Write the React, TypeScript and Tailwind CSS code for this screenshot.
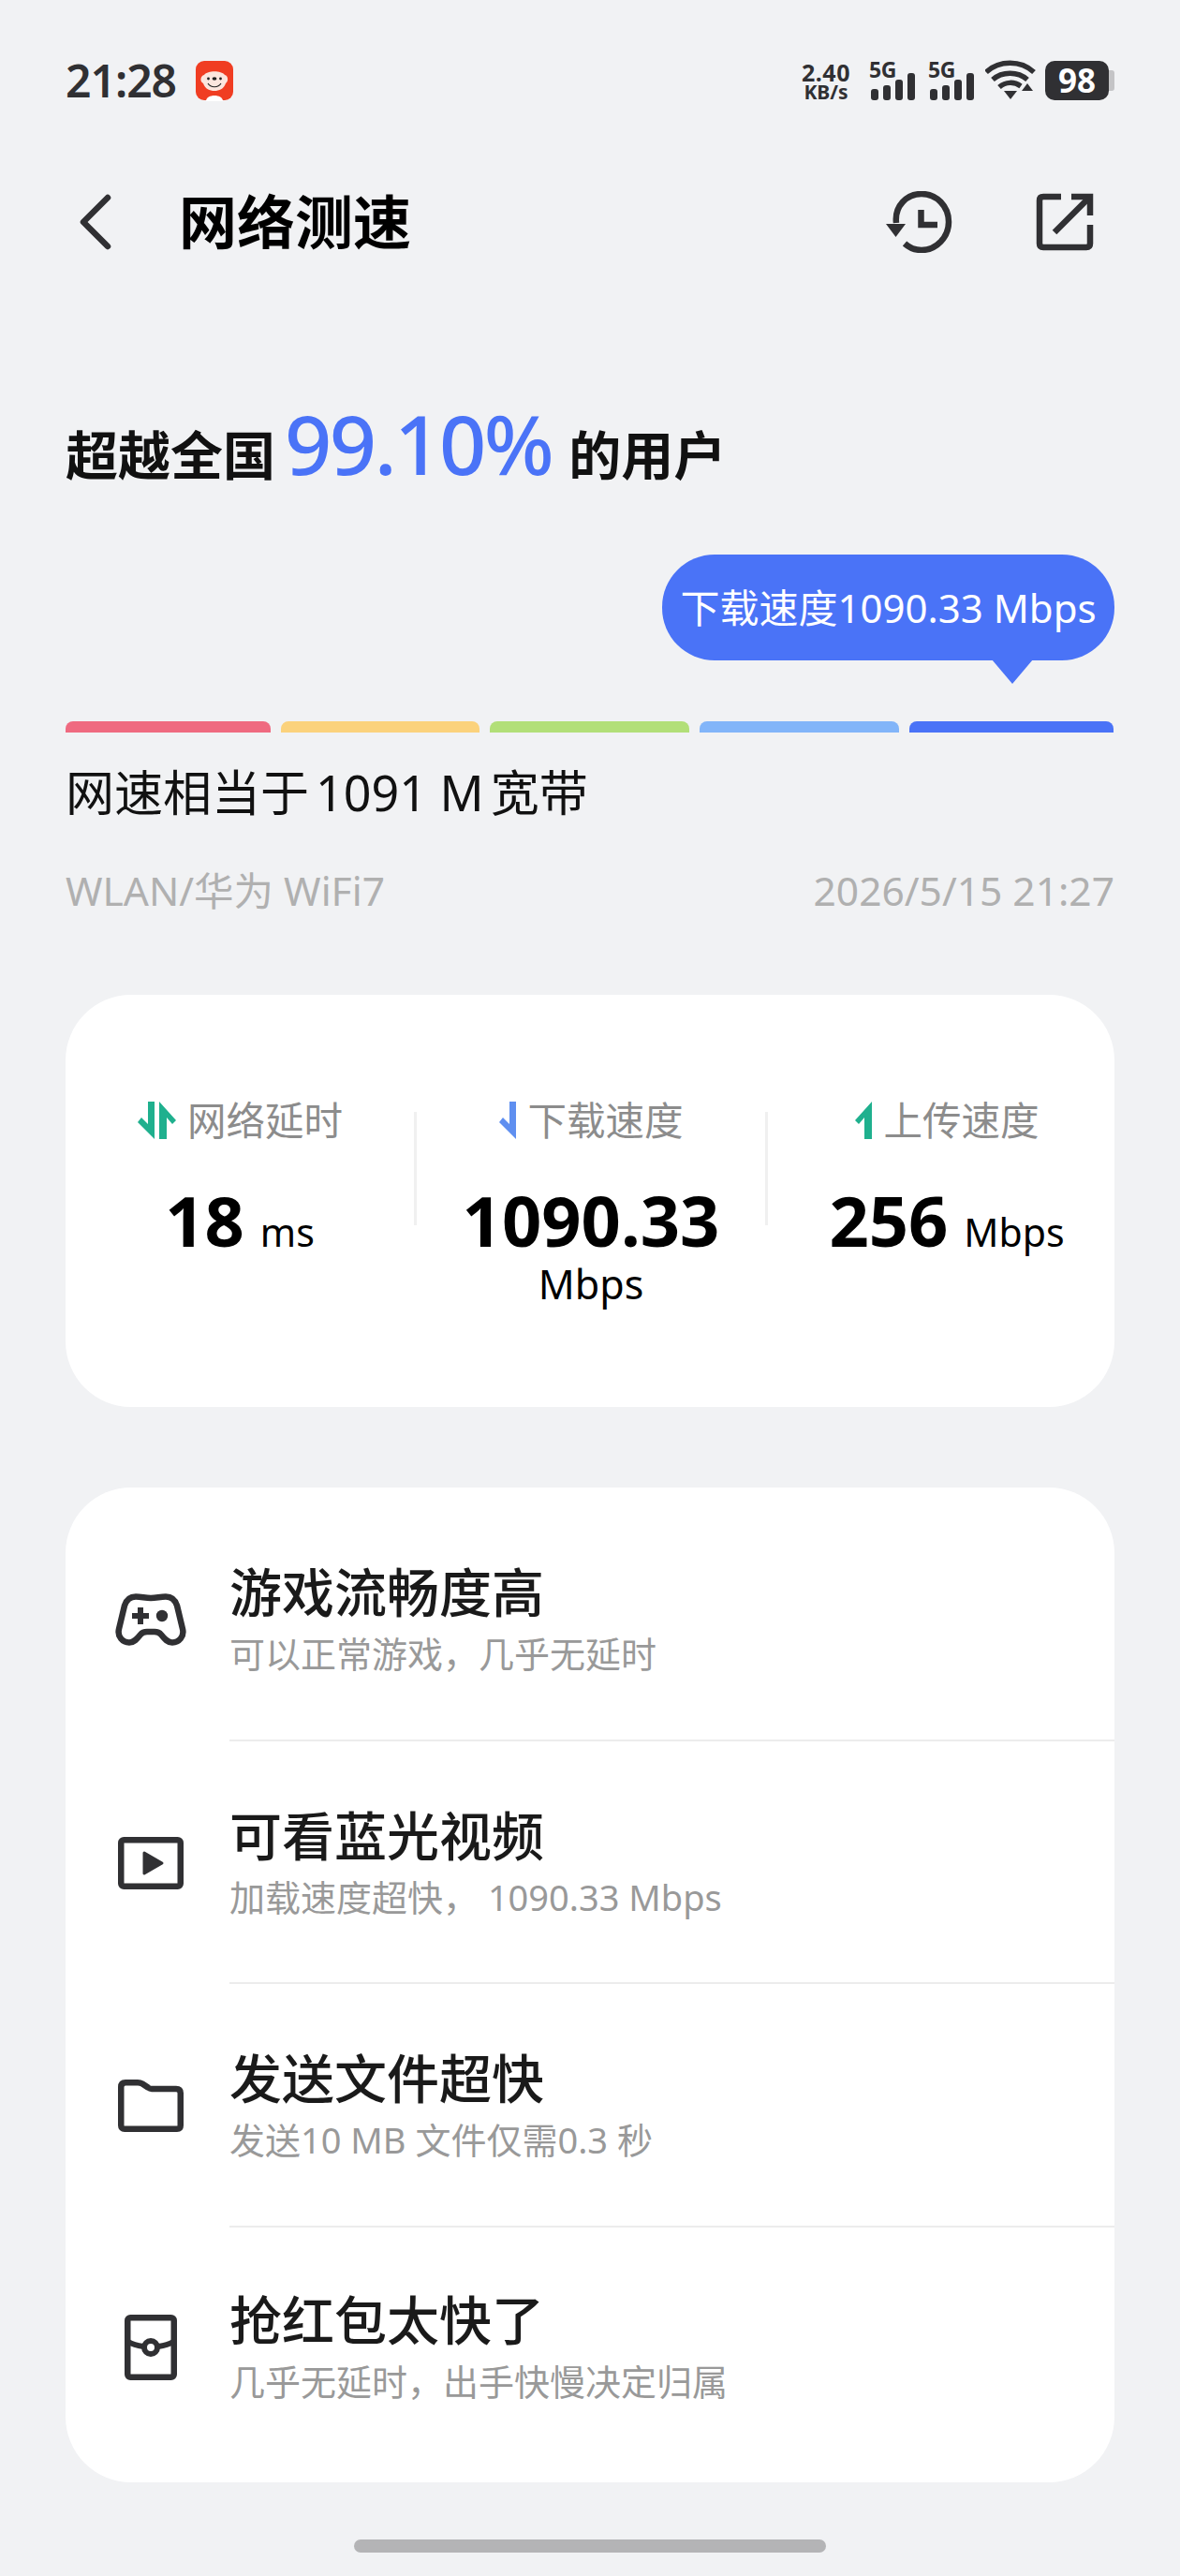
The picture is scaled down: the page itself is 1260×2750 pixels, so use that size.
import React from "react";

function Signal() {
  return (
    <div className="flex flex-col w-[50px] h-[42px]">
      <span className="text-[23px] leading-[19px] font-bold text-[#303033] tracking-[-0.5px]">5G</span>
      <svg width="50" height="29" viewBox="0 0 50 29" className="-mt-[6px]">
        <g fill="#303033">
          <rect x="2" y="17" width="8" height="12" rx="3" />
          <rect x="15" y="13" width="8" height="16" rx="3" />
          <rect x="28" y="7" width="8" height="22" rx="3" />
          <rect x="41" y="0" width="8" height="29" rx="3" />
        </g>
      </svg>
    </div>
  );
}

function Mascot() {
  return (
    <svg width="42" height="44" viewBox="0 0 42 44">
      <rect x="1" y="1" width="40" height="42" rx="9" fill="#f03d22" />
      <path d="M10 16 C14 11 28 11 32 16 C36 17 36 23 33 25 C31 31 26 33 21 33 C16 33 11 31 9 25 C5 23 6 17 10 16 Z" fill="#fbe6de" />
      <path d="M12 44 C12 36 30 36 30 44 Z" fill="#ffffff" />
      <circle cx="14.5" cy="20" r="1.4" fill="#222" />
      <circle cx="27.5" cy="20" r="1.4" fill="#222" />
      <ellipse cx="21" cy="20" rx="2.4" ry="1.8" fill="#222" />
      <path d="M14 25 C17 30 25 30 28 25" fill="none" stroke="#222" strokeWidth="1.1" />
    </svg>
  );
}

function StatusBar() {
  return (
    <div className="flex items-center justify-between h-[42px] mt-[65px]">
      <div className="flex items-center">
        <span className="text-[48px] leading-[42px] font-semibold text-[#303033] tracking-[-1px]">21:28</span>
        <span className="ml-[20px] flex"><Mascot /></span>
      </div>
      <div className="flex items-center">
        <div className="flex flex-col items-center w-[56px] font-bold text-[#303033]">
          <span className="text-[25px] leading-[24px] tracking-[0.5px]">2.40</span>
          <span className="text-[21px] leading-[18px]">KB/s</span>
        </div>
        <div className="ml-[18px]"><Signal /></div>
        <div className="ml-[13px]"><Signal /></div>
        <svg width="56" height="44" viewBox="0 0 56 44" className="ml-[11px]">
          <g fill="none" stroke="#303033" strokeWidth="5.5">
            <path d="M1 13 C15 0 38 0 52 13" />
            <path d="M8 21 C18 12 35 12 45 21" />
            <path d="M15 29 C22 23 31 23 38 28" />
          </g>
          <path d="M20 33 H34 L27 42 Z" fill="#303033" />
          <path d="M39 33 L45 25 L51 33 Z" fill="#303033" />
        </svg>
        <div className="ml-[8px] flex items-center">
          <div className="w-[68px] h-[42px] rounded-[10px] bg-[#303033] flex items-center justify-center text-white text-[35px] leading-[42px] font-bold">98</div>
          <div className="w-[6px] h-[22px] rounded-r-[3px] bg-[#c4c4c6]" />
        </div>
      </div>
    </div>
  );
}

function Header() {
  return (
    <div className="flex items-center justify-between h-[60px] mt-[100px]">
      <div className="flex items-center">
        <svg width="36" height="60" viewBox="0 0 36 60" className="ml-[14px]">
          <path d="M31 4 L5 30 L31 56" fill="none" stroke="#303033" strokeWidth="6.5" strokeLinecap="round" strokeLinejoin="round" />
        </svg>
        <span className="ml-[71px] text-[62px] leading-[60px] font-bold text-black">网络测速</span>
      </div>
      <div className="flex items-center">
        <svg width="72" height="66" viewBox="0 0 72 66">
          <path d="M11 34 C9 16 22 3 38 3 C54 3 67 16 67 33 C67 49 54 63 38 63 C31 63 25 60.5 20 56" fill="none" stroke="#303033" strokeWidth="6.5" />
          <path d="M0 35 H21 L10.5 49 Z" fill="#303033" />
          <path d="M37.5 20 V36 H55" fill="none" stroke="#303033" strokeWidth="6.5" />
        </svg>
        <svg width="62" height="62" viewBox="0 0 62 62" className="ml-[88px] mr-[22px]">
          <path d="M27 4 H8 Q4 4 4 8 V54 Q4 58 8 58 H54 Q58 58 58 54 V34" fill="none" stroke="#303033" strokeWidth="6.5" />
          <path d="M38 4 H58 V24" fill="none" stroke="#303033" strokeWidth="6.5" />
          <path d="M57 5 L20 42" fill="none" stroke="#303033" strokeWidth="6.5" />
        </svg>
      </div>
    </div>
  );
}

function HalfDown({ color }: { color: string }) {
  return (
    <svg width="20" height="40" viewBox="0 0 20 40">
      <path d="M12 0 H19 V40 L1 22 L5 17 L12 24 Z" fill={color} />
    </svg>
  );
}

function HalfUpRight({ color }: { color: string }) {
  return (
    <svg width="20" height="40" viewBox="0 0 20 40">
      <path d="M1 0 L19 20 L15 24 L9 17 V40 H1 Z" fill={color} />
    </svg>
  );
}

function HalfUpLeft({ color }: { color: string }) {
  return (
    <svg width="20" height="40" viewBox="0 0 20 40">
      <path d="M19 0 V40 H11 V17 L5 24 L1 20 Z" fill={color} />
    </svg>
  );
}

function Stat({ icon, label, value, unit, stacked, className }: { icon: React.ReactNode; label: string; value: string; unit: string; stacked?: boolean; className: string }) {
  return (
    <div className={"flex flex-col items-center " + className}>
      <div className="flex items-center h-[50px]">
        {icon}
        <span className="ml-[11px] text-[41.5px] leading-[50px] text-[#8c8c8c]">{label}</span>
      </div>
      <div className={"mt-[42px] " + (stacked ? "flex flex-col items-center" : "flex items-baseline")}>
        <span className="text-[74px] leading-[80px] font-bold text-black">{value}</span>
        <span className={stacked ? "mt-[3px] text-[43px] leading-[50px] text-black" : "ml-[17px] text-[41px] leading-[80px] text-black"}>{unit}</span>
      </div>
    </div>
  );
}

function Row({ icon, title, sub, pt, pb, last }: { icon: React.ReactNode; title: string; sub: string; pt: string; pb: string; last?: boolean }) {
  return (
    <div className="flex">
      <div className={"w-[175px] shrink-0 " + pt}>
        <div className="h-[128px] w-[76px] ml-[53px] flex items-center justify-center">{icon}</div>
      </div>
      <div className={"flex-1 " + pt + " " + pb + (last ? "" : " border-b-2 border-[#ececec]")}>
        <div className="text-[56px] leading-[68px] font-medium text-[#1a1a1a]">{title}</div>
        <div className="mt-[8px] text-[38px] leading-[48px] text-[#999999]">{sub}</div>
      </div>
    </div>
  );
}

export default function App() {
  return (
    <div className="w-[1260px] h-[2750px] overflow-hidden bg-[#f1f2f4] px-[70px] font-['Noto_Sans','Noto_Sans_CJK_SC',sans-serif]">
      <StatusBar />
      <Header />

      <div className="mt-[156px] h-[107px] flex items-baseline">
        <span className="text-[56px] leading-[100px] font-bold text-[#111111]">超越全国</span>
        <span className="ml-[10px] text-[88px] leading-[100px] font-medium text-[#4a73f7] tracking-[-2.5px]">99.10%</span>
        <span className="ml-[18px] text-[56px] leading-[100px] font-bold text-[#111111]">的用户</span>
      </div>

      <div className="flex justify-end mt-[62px]">
        <div className="relative w-[483px] h-[113px] rounded-[56px] bg-[#4a73f7] flex items-center justify-center text-white text-[42px] leading-[60px]">
          下载速度1090.33 Mbps
          <svg width="44" height="26" viewBox="0 0 44 26" className="absolute left-[352px] top-[112px]">
            <path d="M0 0 H44 L22 26 Z" fill="#4a73f7" />
          </svg>
        </div>
      </div>

      <div className="flex gap-[11px] mt-[65px]">
        <div className="w-[219px] h-[12px] rounded-t-[8px] bg-[#ef6a80]" />
        <div className="w-[212px] h-[12px] rounded-t-[8px] bg-[#fbd27c]" />
        <div className="w-[213px] h-[12px] rounded-t-[8px] bg-[#b2df78]" />
        <div className="w-[213px] h-[12px] rounded-t-[8px] bg-[#82b5f9]" />
        <div className="w-[218px] h-[12px] rounded-t-[8px] bg-[#4a73f7]" />
      </div>

      <div className="mt-[34px] text-[52px] leading-[60px] text-[#111111]">网速相当于<span className="mx-[7px]">1091 M</span>宽带</div>

      <div className="mt-[50px] flex justify-between text-[42.5px] leading-[50px] text-[#b0b0b0]">
        <span>WLAN/华为 WiFi7</span>
        <span>2026/5/15 21:27</span>
      </div>

      <div className="mt-[86px] h-[440px] rounded-[70px] bg-white pt-[109px] flex items-start">
        <Stat className="w-[372px]" icon={<span className="flex"><HalfDown color="#1fb08e" /><span className="ml-[3px] flex"><HalfUpRight color="#1fb08e" /></span></span>} label="网络延时" value="18" unit="ms" />
        <div className="w-[3px] h-[121px] mt-[16px] bg-[#f0f0f0] shrink-0" />
        <Stat className="w-[372px]" stacked icon={<HalfDown color="#5f8ff0" />} label="下载速度" value="1090.33" unit="Mbps" />
        <div className="w-[3px] h-[121px] mt-[16px] bg-[#f0f0f0] shrink-0" />
        <Stat className="w-[370px] pl-[12px]" icon={<HalfUpLeft color="#1fb08e" />} label="上传速度" value="256" unit="Mbps" />
      </div>

      <div className="mt-[86px] h-[1062px] rounded-[70px] bg-white overflow-hidden">
        <Row
          pt="pt-[77px]"
          pb="pb-[68px]"
          title="游戏流畅度高"
          sub="可以正常游戏，几乎无延时"
          icon={
            <svg width="76" height="56" viewBox="0 0 76 56">
              <path d="M22 3.5 C28 3.5 32 5 38 5 C44 5 48 3.5 54 3.5 C60 3.5 64 7 66 13 L72 38 C74 46 68 52.5 61 52.5 C56 52.5 53 49 49 44 C47 41.5 45 41 42 41 L34 41 C31 41 29 41.5 27 44 C23 49 20 52.5 15 52.5 C8 52.5 2 46 4 38 L10 13 C12 7 16 3.5 22 3.5 Z" fill="none" stroke="#303033" strokeWidth="6.5" />
              <path d="M18 24 H36 M27 15 V33" stroke="#303033" strokeWidth="6" />
              <circle cx="50" cy="24" r="6.2" fill="#303033" />
            </svg>
          }
        />
        <Row
          pt="pt-[66px]"
          pb="pb-[67px]"
          title="可看蓝光视频"
          sub="加载速度超快， 1090.33 Mbps"
          icon={
            <svg width="70" height="56" viewBox="0 0 70 56">
              <rect x="3.25" y="3.25" width="63.5" height="49.5" rx="3" fill="none" stroke="#303033" strokeWidth="6.5" />
              <path d="M28 17 L47 28 L28 39 Z" fill="#303033" stroke="#303033" strokeWidth="3" strokeLinejoin="round" />
            </svg>
          }
        />
        <Row
          pt="pt-[66px]"
          pb="pb-[68px]"
          title="发送文件超快"
          sub="发送10 MB 文件仅需0.3 秒"
          icon={
            <svg width="70" height="56" viewBox="0 0 70 56">
              <path d="M3.25 8 Q3.25 3.25 8 3.25 H21 Q24 3.25 26 4.5 L32 8.5 Q34 10 36 10 H62 Q66.75 10 66.75 14.5 V49 Q66.75 52.75 63 52.75 H7 Q3.25 52.75 3.25 49 Z" fill="none" stroke="#303033" strokeWidth="6.5" />
            </svg>
          }
        />
        <Row
          last
          pt="pt-[64px]"
          pb="pb-[0px]"
          title="抢红包太快了"
          sub="几乎无延时，出手快慢决定归属"
          icon={
            <svg width="56" height="70" viewBox="0 0 56 70">
              <rect x="3.25" y="3.25" width="49.5" height="63.5" rx="3" fill="none" stroke="#303033" strokeWidth="6.5" />
              <path d="M4 29 C9 32 13 33 20 34 M36 34 C43 33 47 32 52 29" fill="none" stroke="#303033" strokeWidth="6" />
              <circle cx="28" cy="35" r="7" fill="#ffffff" stroke="#303033" strokeWidth="6" />
            </svg>
          }
        />
      </div>

      <div className="mt-[61px] mx-auto w-[504px] h-[14px] rounded-full bg-[#b4b4b6]" />
    </div>
  );
}
